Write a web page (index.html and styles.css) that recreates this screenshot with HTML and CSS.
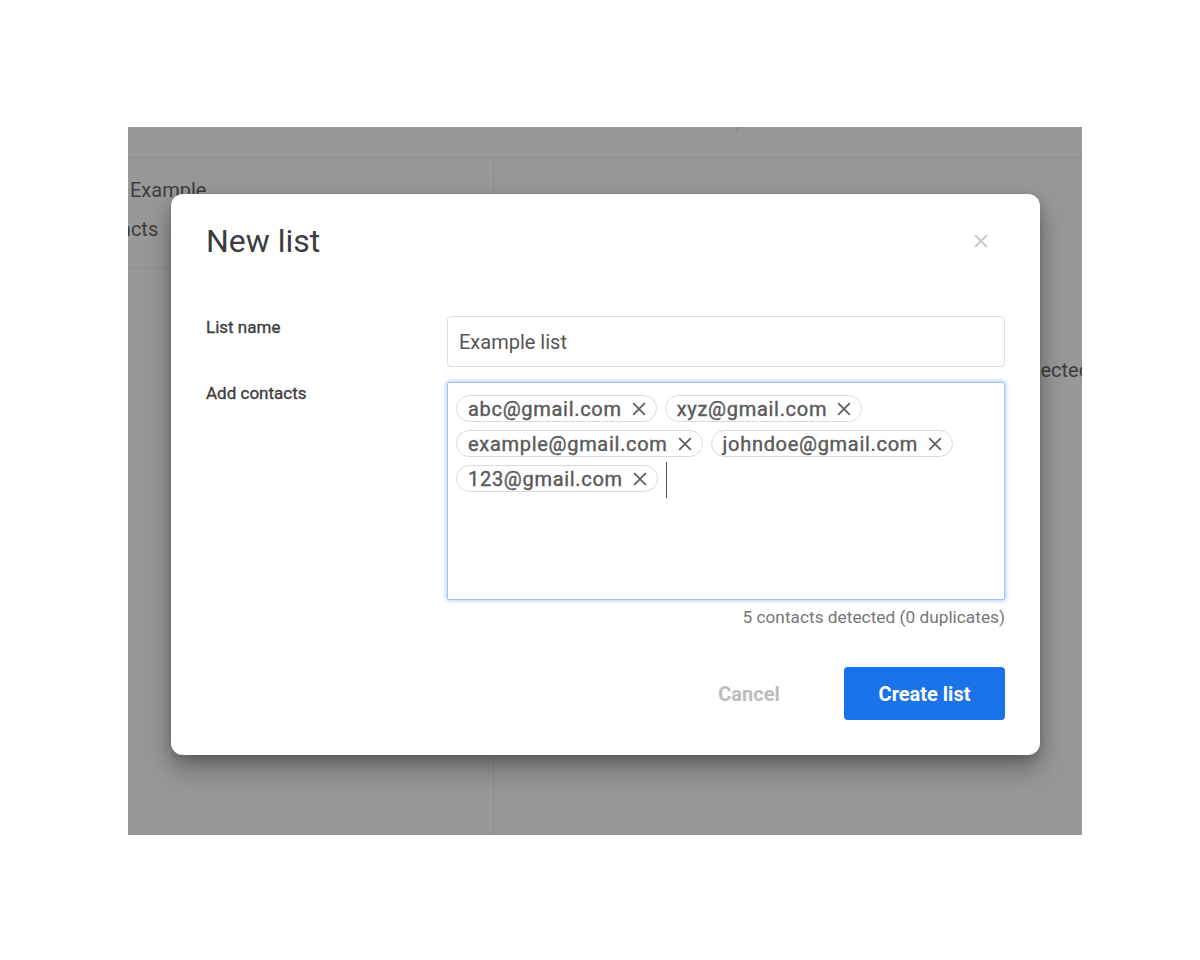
FILE: index.html
```html
<!DOCTYPE html>
<html lang="en">
<head>
  <meta charset="UTF-8">
  <meta name="viewport" content="width=device-width, initial-scale=1.0">
  <title>New list</title>
  <link rel="stylesheet" href="styles.css">
</head>
<body>
  <div class="shot">
    <!-- dimmed app behind the dialog -->
    <div class="app">
      <div class="app-top"><span class="tick"></span></div>
      <div class="app-body">
        <div class="app-side">
          <div class="side-group">
            <div class="side-item side-name">Example</div>
            <div class="side-item side-sub">Contacts</div>
          </div>
        </div>
        <div class="app-main">
          <div class="main-note">5 contacts detected</div>
        </div>
      </div>
    </div>

    <div class="dialog">
      <div class="dialog-head">
        <h2>New list</h2>
        <button class="close" aria-label="Close">
          <svg width="18" height="18" viewBox="0 0 18 18"><path d="M3 3L15 15M15 3L3 15" stroke="#c8c8c8" stroke-width="1.8" fill="none"/></svg>
        </button>
      </div>

      <div class="form">
        <label class="label">List name</label>
        <div class="field">
          <div class="input">Example list</div>
        </div>

        <label class="label">Add contacts</label>
        <div class="field">
          <div class="chips-box">
            <span class="chip">abc@gmail.com <svg class="x" viewBox="0 0 12 12"><path d="M1 1L11 11M11 1L1 11"/></svg></span>
            <span class="chip">xyz@gmail.com <svg class="x" viewBox="0 0 12 12"><path d="M1 1L11 11M11 1L1 11"/></svg></span>
            <span class="chip">example@gmail.com <svg class="x" viewBox="0 0 12 12"><path d="M1 1L11 11M11 1L1 11"/></svg></span>
            <span class="chip">johndoe@gmail.com <svg class="x" viewBox="0 0 12 12"><path d="M1 1L11 11M11 1L1 11"/></svg></span>
            <span class="chip">123@gmail.com <svg class="x" viewBox="0 0 12 12"><path d="M1 1L11 11M11 1L1 11"/></svg></span>
            <span class="caret"></span>
          </div>
          <div class="count">5 contacts detected (0 duplicates)</div>
        </div>
      </div>

      <div class="actions">
        <button class="btn-cancel">Cancel</button>
        <button class="btn-create">Create list</button>
      </div>
    </div>
  </div>
</body>
</html>
```

FILE: styles.css
```css
/* Page */
body {
  margin: 0;
  background: #fff;
  font-family: 'Roboto', 'Liberation Sans', sans-serif;
}

.shot {
  position: relative;
  width: 954px;
  height: 708px;
  margin: 127px 0 0 128px;
  overflow: hidden;
  background: #989898;
}

/* Dimmed app in the back */
.app {
  height: 100%;
  display: flex;
  flex-direction: column;
}

.app-top {
  height: 30px;
  border-bottom: 1px solid #8f8f8f;
  position: relative;
}

.tick {
  position: absolute;
  left: 609px;
  top: 0;
  width: 1px;
  height: 5px;
  background: #7d7d7d;
}

.app-body {
  flex: 1;
  display: flex;
}

.app-side {
  width: 365px;
  border-right: 1px solid #8f8f8f;
}

.side-group {
  padding: 13px 0 0 0;
  box-sizing: border-box;
  height: 111px;
  border-bottom: 1px solid #8f8f8f;
}

.side-item {
  color: #3d3d3d;
  font-size: 20px;
  line-height: 39px;
  white-space: nowrap;
}

.side-name {
  padding-left: 2px;
}

.side-sub {
  margin-left: -50px;
}

.app-main {
  flex: 1;
  position: relative;
}

.main-note {
  position: absolute;
  top: 200px;
  right: -8px;
  font-size: 20px;
  color: #3d3d3d;
  white-space: nowrap;
}

/* Dialog */
.dialog {
  position: absolute;
  left: 43px;
  top: 67px;
  width: 869px;
  height: 561px;
  box-sizing: border-box;
  padding: 26px 35px 35px 35px;
  background: #fff;
  border-radius: 12px;
  box-shadow: 0 14px 28px rgba(0, 0, 0, 0.32), 0 4px 10px rgba(0, 0, 0, 0.18);
  display: flex;
  flex-direction: column;
}

.dialog-head {
  display: flex;
  justify-content: space-between;
  align-items: center;
  height: 42px;
}

.dialog-head h2 {
  margin: 0;
  font-size: 32px;
  font-weight: 400;
  color: #3c3c3c;
}

.close {
  border: none;
  background: none;
  padding: 0;
  margin-right: 15px;
  width: 18px;
  height: 18px;
  display: flex;
}

.form {
  margin-top: 54px;
  display: grid;
  grid-template-columns: 241px 1fr;
  row-gap: 15px;
}

.label {
  font-size: 17px;
  font-weight: 400;
  color: #404040;
  -webkit-text-stroke: 0.35px #404040;
  padding-top: 1px;
}

.input {
  height: 49px;
  border: 1px solid #dcdcdc;
  border-radius: 4px;
  padding: 0 11px;
  display: flex;
  align-items: center;
  font-size: 20px;
  color: #555;
}

.chips-box {
  height: 218px;
  box-sizing: border-box;
  border: 1px solid #9fc0f4;
  border-radius: 2px;
  box-shadow: 0 0 4px 1px rgba(66, 133, 244, 0.4);
  padding: 12px 8px;
  display: flex;
  flex-wrap: wrap;
  align-content: flex-start;
  align-items: center;
  gap: 8px 8px;
}

.chip {
  height: 27px;
  box-sizing: border-box;
  border: 1px solid #dadada;
  border-radius: 14px;
  padding: 0 10px 0 11px;
  display: inline-flex;
  align-items: center;
  gap: 10px;
  font-size: 20px;
  font-weight: 400;
  letter-spacing: 0.7px;
  color: #5a5a5a;
  -webkit-text-stroke: 0.4px #5a5a5a;
}

.x {
  width: 14px;
  height: 14px;
  stroke: #5f5f5f;
  stroke-width: 1.5;
  fill: none;
}

.caret {
  width: 1px;
  height: 36px;
  margin: -3px 0 -6px 0;
  background: #555;
}

.count {
  margin-top: 7px;
  text-align: right;
  font-size: 17.3px;
  color: #777;
}

/* Footer buttons */
.actions {
  margin-top: auto;
  display: flex;
  justify-content: flex-end;
  align-items: center;
}

.btn-cancel {
  border: none;
  background: none;
  font-family: inherit;
  font-size: 20px;
  font-weight: 700;
  color: #bdbdbd;
  width: 100px;
  margin-right: 45px;
}

.btn-create {
  width: 161px;
  height: 53px;
  border: none;
  border-radius: 4px;
  background: #1a73e8;
  color: #fff;
  font-family: inherit;
  font-size: 20px;
  font-weight: 700;
}
```
